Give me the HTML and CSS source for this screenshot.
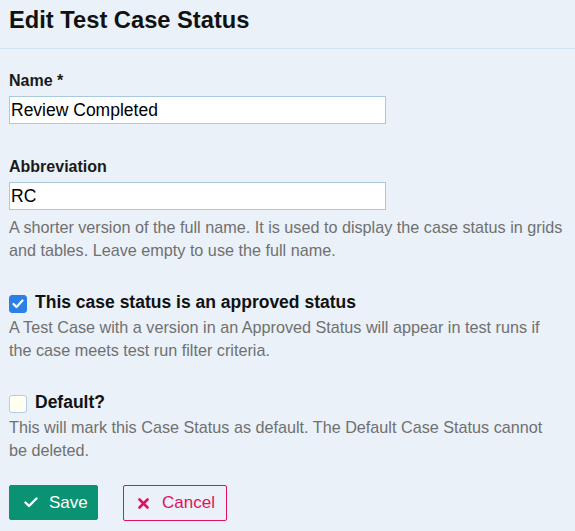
FILE: index.html
```html
<html lang="en">
<head>
    <meta charset="UTF-8">
    <meta name="viewport" content="width=device-width, initial-scale=1.0">
    <title>Edit Test Case Status</title>
    <link rel="stylesheet" href="styles.css">
</head>
<body>
    <div class="page-header">
        <h1>Edit Test Case Status</h1>
    </div>

    <form class="edit-form" onsubmit="return false;">
        <div class="field field-name">
            <label class="field-label" for="statusName">Name *</label>
            <input class="text-input" id="statusName" type="text" value="Review Completed">
        </div>

        <div class="field">
            <label class="field-label" for="statusAbbr">Abbreviation</label>
            <input class="text-input" id="statusAbbr" type="text" value="RC">
            <p class="help-text">A shorter version of the full name. It is used to display the case status in grids and tables. Leave empty to use the full name.</p>
        </div>

        <div class="field">
            <label class="check-row">
                <span class="check-box checked">
                    <svg width="12" height="10" viewBox="0 0 12 10"><polyline points="1.5,5 4.5,8 10.5,1.5" fill="none" stroke="#fff" stroke-width="2.2" stroke-linecap="round" stroke-linejoin="round"/></svg>
                </span>
                This case status is an approved status
            </label>
            <p class="help-text check-help">A Test Case with a version in an Approved Status will appear in test runs if the case meets test run filter criteria.</p>
        </div>

        <div class="field">
            <label class="check-row">
                <span class="check-box"></span>
                Default?
            </label>
            <p class="help-text check-help">This will mark this Case Status as default. The Default Case Status cannot be deleted.</p>
        </div>

        <div class="actions">
            <button class="btn btn-save" type="submit">
                <svg width="14" height="11" viewBox="0 0 14 11"><polyline points="1.5,5.5 5,9 12.5,1.5" fill="none" stroke="#fff" stroke-width="2.4" stroke-linecap="round" stroke-linejoin="round"/></svg>
                Save
            </button>
            <button class="btn btn-cancel" type="button">
                <svg width="11" height="11" viewBox="0 0 11 11"><path d="M1.5 1.5 L9.5 9.5 M9.5 1.5 L1.5 9.5" stroke="#e3105d" stroke-width="2.6" stroke-linecap="round"/></svg>
                Cancel
            </button>
        </div>
    </form>
</body>
</html>
```

FILE: styles.css
```css
body {
    margin: 0;
    background-color: #eaf1f8;
    font-family: "Liberation Sans", Arial, sans-serif;
    color: #1a1a1a;
}
.page-header {
    padding: 5px 9px 13px;
    border-bottom: 1px solid #d2e2f0;
}
.page-header h1 {
    margin: 0;
    font-size: 23.7px;
    line-height: 30px;
    font-weight: bold;
    color: #111;
}
.edit-form {
    padding: 22px 9px 0;
    max-width: 555px;
}
.field {
    margin-bottom: 30px;
}
.field-name {
    margin-bottom: 33px;
}
.field-label {
    display: block;
    font-size: 16px;
    line-height: 20px;
    font-weight: bold;
    margin-bottom: 5px;
}
.text-input {
    display: block;
    box-sizing: border-box;
    width: 377px;
    height: 28px;
    margin: 0;
    padding: 0 1px;
    border: 1px solid #a9c8e2;
    background-color: #fff;
    font-family: "Liberation Sans", Arial, sans-serif;
    font-size: 17.5px;
    color: #000;
    outline: none;
}
.help-text {
    margin: 6px 0 0;
    font-size: 16.2px;
    line-height: 23px;
    color: #707070;
}
.check-help {
    margin-top: 4px;
}
.check-row {
    display: flex;
    align-items: center;
    gap: 8px;
    height: 20px;
    font-size: 17.5px;
    line-height: 20px;
    font-weight: bold;
    color: #111;
}
.check-box {
    box-sizing: border-box;
    width: 18px;
    height: 18px;
    margin-top: 3px;
    border: 1px solid #b7cbe6;
    border-radius: 3px;
    background-color: #fffff2;
    display: flex;
    align-items: center;
    justify-content: center;
}
.check-box.checked {
    background-color: #2c7fe6;
    border-color: #2c7fe6;
}
.actions {
    display: flex;
    gap: 25px;
    margin-top: -7px;
}
.btn {
    display: flex;
    align-items: center;
    gap: 11px;
    box-sizing: border-box;
    height: 36px;
    margin: 0;
    border-radius: 2px;
    font-family: "Liberation Sans", Arial, sans-serif;
    font-size: 17px;
    cursor: pointer;
}
.btn-save {
    width: 89px;
    height: 35px;
    padding: 0 0 0 14px;
    background-color: #0a9372;
    border: 1px solid #0a9372;
    color: #fff;
}
.btn-cancel {
    width: 104px;
    padding: 0 0 0 14px;
    gap: 13px;
    background-color: transparent;
    border: 1px solid #e3105d;
    color: #e3105d;
}
```
